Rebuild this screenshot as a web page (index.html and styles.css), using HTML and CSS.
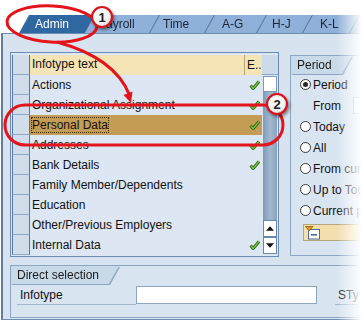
FILE: index.html
```html
<!DOCTYPE html>
<html>
<head>
<meta charset="utf-8">
<link rel="stylesheet" href="styles.css">
</head>
<body>
<div class="screen">
  <div class="tabs">
    <div class="tab t1 active"><div class="tshape">Admin</div></div>
    <div class="tab t2"><div class="tshape">Payroll</div></div>
    <div class="tab t3"><div class="tshape">Time</div></div>
    <div class="tab t4"><div class="tshape">A-G</div></div>
    <div class="tab t5"><div class="tshape">H-J</div></div>
    <div class="tab t6"><div class="tshape">K-L</div></div>
    <div class="tab t7"><div class="tshape"></div></div>
  </div>
  <div class="panel">
    <div class="top">
      <div class="table">
        <div class="grid">
          <div class="row head"><div class="sel"></div><div class="txt">Infotype text</div><div class="e">E..</div></div>
          <div class="row"><div class="sel"></div><div class="txt">Actions</div><div class="e"><svg class="chk" viewBox="0 0 11 10"><path class="o" d="M1.5 5.5 L4.2 8.5 L10 1.5"/><path class="i" d="M1.5 5.5 L4.2 8.5 L10 1.5"/></svg></div></div>
          <div class="row"><div class="sel"></div><div class="txt">Organizational Assignment</div><div class="e"><svg class="chk" viewBox="0 0 11 10"><path class="o" d="M1.5 5.5 L4.2 8.5 L10 1.5"/><path class="i" d="M1.5 5.5 L4.2 8.5 L10 1.5"/></svg></div></div>
          <div class="row selrow"><div class="sel"></div><div class="txt"><span class="focus">Personal Data</span></div><div class="e"><svg class="chk" viewBox="0 0 11 10"><path class="o" d="M1.5 5.5 L4.2 8.5 L10 1.5"/><path class="i" d="M1.5 5.5 L4.2 8.5 L10 1.5"/></svg></div></div>
          <div class="row"><div class="sel"></div><div class="txt">Addresses</div><div class="e"><svg class="chk" viewBox="0 0 11 10"><path class="o" d="M1.5 5.5 L4.2 8.5 L10 1.5"/><path class="i" d="M1.5 5.5 L4.2 8.5 L10 1.5"/></svg></div></div>
          <div class="row"><div class="sel"></div><div class="txt">Bank Details</div><div class="e"><svg class="chk" viewBox="0 0 11 10"><path class="o" d="M1.5 5.5 L4.2 8.5 L10 1.5"/><path class="i" d="M1.5 5.5 L4.2 8.5 L10 1.5"/></svg></div></div>
          <div class="row"><div class="sel"></div><div class="txt">Family Member/Dependents</div><div class="e"></div></div>
          <div class="row"><div class="sel"></div><div class="txt">Education</div><div class="e"></div></div>
          <div class="row"><div class="sel"></div><div class="txt">Other/Previous Employers</div><div class="e"></div></div>
          <div class="row"><div class="sel"></div><div class="txt">Internal Data</div><div class="e"><svg class="chk" viewBox="0 0 11 10"><path class="o" d="M1.5 5.5 L4.2 8.5 L10 1.5"/><path class="i" d="M1.5 5.5 L4.2 8.5 L10 1.5"/></svg></div></div>
        </div>
        <div class="sb">
          <div class="sb-head"></div>
          <div class="sb-top"></div>
          <div class="sb-track"></div>
          <div class="sb-btn"><svg viewBox="0 0 9 5" class="arr"><path d="M0 5 L4.5 0 L9 5 Z"/></svg></div>
          <div class="sb-btn"><svg viewBox="0 0 9 5" class="arr"><path d="M0 0 L4.5 5 L9 0 Z"/></svg></div>
        </div>
      </div>
      <div class="group period">
        <div class="ghw"><div class="ghead gp">Period</div></div>
        <div class="opt"><span class="radio on"></span><span>Period</span></div>
        <div class="opt from"><span class="flabel">From</span><span class="finput"></span></div>
        <div class="opt"><span class="radio"></span><span>Today</span></div>
        <div class="opt"><span class="radio"></span><span>All</span></div>
        <div class="opt"><span class="radio"></span><span>From curr.date</span></div>
        <div class="opt"><span class="radio"></span><span>Up to Today</span></div>
        <div class="opt"><span class="radio"></span><span>Current period</span></div>
        <div class="dd">
          <svg class="ddicon" viewBox="0 0 16 14"><rect x="3.5" y="3.5" width="11" height="9.5" fill="#fff" stroke="#4a6d96"/><rect x="6" y="8" width="6" height="1.6" fill="#4a6d96"/><path d="M0.5 0.5 L8 0.5 L4.2 5 Z" fill="#e0a020" stroke="#8a5a10" stroke-width="0.8"/></svg>
        </div>
      </div>
    </div>
    <div class="group direct">
      <div class="ghw"><div class="ghead gd">Direct selection</div></div>
      <div class="drow">
        <span class="dlabel">Infotype</span>
        <span class="dinput"></span>
        <span class="sty">STy</span>
      </div>
    </div>
  </div>
</div>

<svg class="annot" viewBox="0 0 361 329" width="361" height="329">
  <defs>
    <radialGradient id="mg" cx="40%" cy="35%" r="70%">
      <stop offset="0" stop-color="#ffffff"/>
      <stop offset="0.7" stop-color="#f2f2f2"/>
      <stop offset="1" stop-color="#c8c8c8"/>
    </radialGradient>
    <filter id="sh" x="-50%" y="-50%" width="200%" height="200%">
      <feDropShadow dx="1.5" dy="2" stdDeviation="1.5" flood-color="#000" flood-opacity="0.45"/>
    </filter>
  </defs>
  <ellipse cx="52" cy="24" rx="45" ry="18" transform="rotate(3 52 24)" fill="none" stroke="#e3141c" stroke-width="3"/>
  <path d="M57 42 Q 115 58 129.5 95" fill="none" stroke="#e3141c" stroke-width="3"/>
  <path d="M132.5 91.5 L123.5 95 L131 103 Z" fill="#e3141c"/>
  <rect x="5" y="105" width="278" height="40" rx="20" ry="20" fill="none" stroke="#e3141c" stroke-width="3"/>
  <g filter="url(#sh)">
    <circle cx="102" cy="17" r="10" fill="url(#mg)" stroke="#d4141c" stroke-width="2.2"/>
    <circle cx="277" cy="104" r="10" fill="url(#mg)" stroke="#d4141c" stroke-width="2.2"/>
  </g>
  <text x="102" y="21.5" class="mnum">1</text>
  <text x="277" y="108.5" class="mnum">2</text>
</svg>
<div class="fade-r"></div>
</body>
</html>
```

FILE: styles.css
```css
html, body {
  margin: 0;
  padding: 0;
}
body {
  width: 361px;
  height: 329px;
  overflow: hidden;
  background: #ffffff;
  font-family: "Liberation Sans", Arial, sans-serif;
  font-size: 12px;
  color: #111;
  position: relative;
}
.screen {
  padding-top: 15px;
}

/* Tabs */
.tabs {
  display: flex;
  height: 18px;
  padding-left: 20px;
}
.tab {
  flex: none;
  margin-right: -10px;
  filter: drop-shadow(-1px 0 0 #4f7299);
}
.tshape {
  height: 18px;
  box-sizing: border-box;
  background: #8fb1d9;
  clip-path: polygon(0 100%, 10px 0, 100% 0, 100% 100%);
  padding-left: 15px;
  line-height: 19px;
  color: #1a2635;
  white-space: nowrap;
}
.tab.active .tshape {
  background: #2f68a0;
  color: #ffffff;
}
.t1 { width: 75px; }
.t2 { width: 75px; }
.t2 .tshape { padding-left: 13px; }
.t3 { width: 65px; }
.t3 .tshape { padding-left: 13px; }
.t4 { width: 62px; }
.t4 .tshape { padding-left: 17px; }
.t5 { width: 56px; }
.t6 { width: 57px; }
.t6 .tshape { padding-left: 17px; }
.t7 { width: 40px; }

/* Panel */
.panel {
  margin-left: 1px;
  height: 287px;
  box-sizing: border-box;
  border: 1px solid #6d8db3;
  border-left: 2px solid #5f7b9e;
  border-right: none;
  background: #d8e3f0;
  padding: 18px 0 0 7px;
}
.top {
  display: flex;
  gap: 11px;
  align-items: flex-start;
}

/* Table */
.table {
  flex: none;
  width: 269px;
  height: 205px;
  box-sizing: border-box;
  border: 1px solid #6b8bb2;
  padding: 2px 0 0 1px;
  display: flex;
  background: #dde7f3;
}
.grid {
  width: 250px;
}
.row {
  display: flex;
  height: 20px;
}
.sel {
  width: 18px;
  flex: none;
  box-sizing: border-box;
  background: #d2ddec;
  border-left: 1px solid #56789f;
  border-right: 1px solid #56789f;
  border-bottom: 1px solid #8ea9c8;
}
.txt {
  flex: 1;
  padding-left: 2px;
  line-height: 20px;
  white-space: nowrap;
  overflow: hidden;
}
.e {
  width: 17px;
  flex: none;
  display: flex;
  align-items: center;
  justify-content: center;
}
.head .txt {
  background: #f5e4b6;
  border-right: 1px solid #b9a678;
  line-height: 19px;
}
.head .e {
  background: #f5e4b6;
  justify-content: flex-start;
  padding-left: 2px;
  box-sizing: border-box;
}
.head .sel {
  background: #d2ddec;
}
.selrow .txt,
.selrow .e {
  background: #c59c55;
}
.focus {
  outline: 1px dotted #3a2a10;
  outline-offset: 0;
}
.chk {
  width: 11px;
  height: 10px;
  margin-left: 2px;
}
.chk .o {
  fill: none;
  stroke: #2c6410;
  stroke-width: 3;
  stroke-linejoin: round;
}
.chk .i {
  fill: none;
  stroke: #7ec24a;
  stroke-width: 1.2;
}

/* Scrollbar */
.sb {
  width: 16px;
  display: flex;
  flex-direction: column;
}
.sb-head {
  height: 20px;
  background: #cddaea;
  border-bottom: 1px solid #8ea9c8;
  box-sizing: border-box;
}
.sb-top {
  height: 16px;
  background: #ffffff;
  border: 1px solid #7f9aba;
  box-sizing: border-box;
  margin: 1px 1px 0 1px;
}
.sb-track {
  height: 128px;
  background: linear-gradient(to right, #7f9ab7, #a2b8cf 50%, #8aa3bf);
  margin: 0 1px;
}
.sb-btn {
  height: 17px;
  box-sizing: border-box;
  background: #ffffff;
  border: 1px solid #6b87a8;
  margin: 0 1px;
  display: flex;
  align-items: center;
  justify-content: center;
}
.arr {
  width: 8px;
  height: 5px;
  fill: #111;
}

/* Groups */
.group {
  box-sizing: border-box;
  border: 1px solid #8aa5c5;
  border-right: none;
  background: #d9e4f1;
}
.ghw {
  filter: drop-shadow(1px 1px 0 #8aa5c5);
  display: inline-block;
}
.ghead {
  height: 18px;
  box-sizing: border-box;
  background: #c8d9e8;
  clip-path: polygon(0 0, 100% 0, calc(100% - 10px) 100%, 0 100%);
  padding-left: 6px;
  line-height: 18px;
  white-space: nowrap;
  color: #1a1a1a;
}
.period {
  flex: none;
  width: 76px;
  height: 201px;
  margin-top: 3px;
  overflow: hidden;
}
.gp {
  width: 61px;
}
.opt {
  display: flex;
  align-items: center;
  height: 21px;
  padding-left: 9px;
  gap: 2px;
  white-space: nowrap;
}
.opt:first-of-type {
  margin-top: 1px;
}
.radio {
  width: 11px;
  height: 11px;
  flex: none;
  box-sizing: border-box;
  border-radius: 50%;
  border: 1px solid #3a3a3a;
  background: #ffffff;
  position: relative;
}
.radio.on::after {
  content: "";
  position: absolute;
  left: 2px;
  top: 2px;
  width: 5px;
  height: 5px;
  border-radius: 50%;
  background: #2a2a2a;
}
.from .flabel {
  margin-left: 13px;
  width: 38px;
  flex: none;
}
.finput {
  width: 40px;
  height: 17px;
  flex: none;
  background: #eef2f7;
  border: 1px solid #9fb2c8;
  box-sizing: border-box;
}
.dd {
  margin: 3px 0 0 12px;
  height: 17px;
  box-sizing: border-box;
  background: #f3dfae;
  border: 1px solid #b7a67c;
  border-right: none;
  display: flex;
  align-items: center;
  padding-left: 1px;
}
.ddicon {
  width: 16px;
  height: 14px;
}

/* Direct selection */
.direct {
  margin-top: 8px;
  height: 53px;
  width: 360px;
}
.gd {
  width: 108px;
}
.drow {
  display: flex;
  align-items: center;
  height: 20px;
  margin-top: 1px;
  padding-left: 6px;
  white-space: nowrap;
}
.dlabel {
  width: 119px;
  flex: none;
  box-sizing: border-box;
  padding-left: 3px;
  line-height: 18px;
  border-bottom: 1px solid #a6b8cc;
}
.dinput {
  width: 181px;
  height: 18px;
  flex: none;
  box-sizing: border-box;
  background: #ffffff;
  border: 1px solid #8fa6bf;
}
.sty {
  margin-left: 18px;
  line-height: 18px;
  border-bottom: 1px solid #a6b8cc;
  padding-left: 3px;
}

/* Annotation overlay */
.annot {
  position: absolute;
  left: 0;
  top: 0;
  pointer-events: none;
}
.mnum {
  font-family: "Liberation Sans", Arial, sans-serif;
  font-weight: bold;
  font-size: 13px;
  fill: #222;
  text-anchor: middle;
}
.fade-r {
  position: absolute;
  top: 0;
  right: 0;
  width: 24px;
  height: 329px;
  background: linear-gradient(to right, rgba(255,255,255,0), rgba(255,255,255,0.97));
  pointer-events: none;
}
```
